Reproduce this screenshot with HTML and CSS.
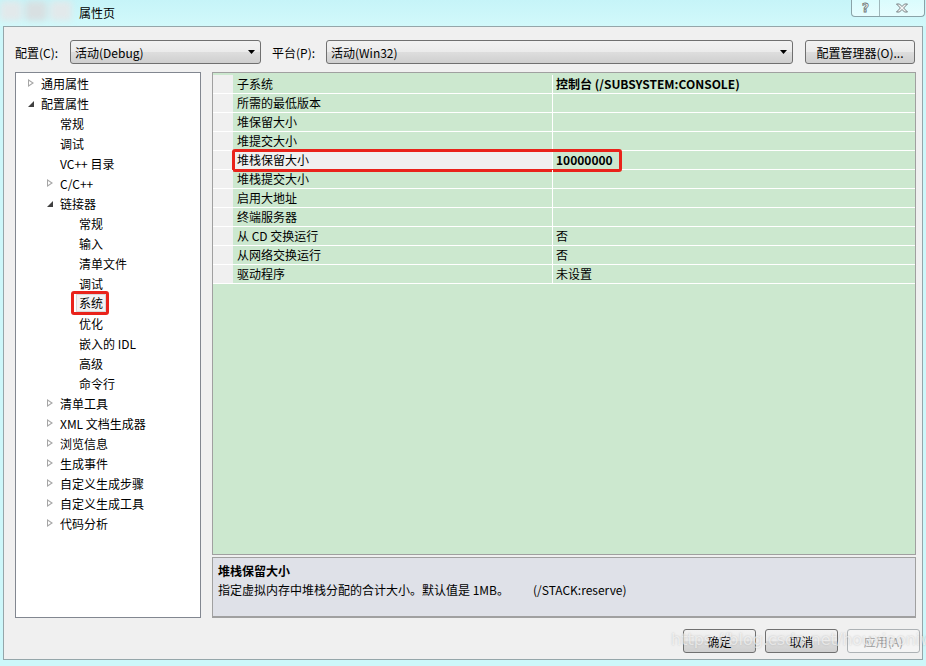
FILE: index.html
```html
<!DOCTYPE html>
<html lang="zh-CN">
<head>
    <meta charset="UTF-8">
    <title>属性页</title>
    <link rel="stylesheet" href="styles.css">
</head>
<body>
    <div class="titlebar">
        <div class="app-icon"><span></span><span></span><span></span></div>
        <div class="title">属性页</div>
        <div class="caption-btns">
            <div class="cap help">?</div>
            <div class="cap close">
                <svg width="14" height="10" viewBox="0 0 14 10"><path d="M1.5 1 L4.5 1 L7 3.5 L9.5 1 L12.5 1 L8.6 5 L12.5 9 L9.5 9 L7 6.5 L4.5 9 L1.5 9 L5.4 5 Z" fill="#f4f6f6" stroke="#6b7577" stroke-width="0.9"/></svg>
            </div>
        </div>
    </div>

    <div class="client">
        <div class="toolbar">
            <label class="lbl lbl-config">配置(C):</label>
            <div class="combo combo-config">
                <span>活动(Debug)</span>
                <svg class="drop" width="7" height="4" viewBox="0 0 7 4"><path d="M0 0 L7 0 L3.5 4 Z" fill="#000"/></svg>
            </div>
            <label class="lbl lbl-platform">平台(P):</label>
            <div class="combo combo-platform">
                <span>活动(Win32)</span>
                <svg class="drop" width="7" height="4" viewBox="0 0 7 4"><path d="M0 0 L7 0 L3.5 4 Z" fill="#000"/></svg>
            </div>
            <button class="btn btn-manager">配置管理器(O)...</button>
        </div>

        <div class="main">
            <ul class="tree">
                <li class="lv0"><i class="arrow closed"></i>通用属性</li>
                <li class="lv0"><i class="arrow open"></i>配置属性</li>
                <li class="lv1"><i class="arrow"></i>常规</li>
                <li class="lv1"><i class="arrow"></i>调试</li>
                <li class="lv1"><i class="arrow"></i>VC++ 目录</li>
                <li class="lv1"><i class="arrow closed"></i>C/C++</li>
                <li class="lv1"><i class="arrow open"></i>链接器</li>
                <li class="lv2"><i class="arrow"></i>常规</li>
                <li class="lv2"><i class="arrow"></i>输入</li>
                <li class="lv2"><i class="arrow"></i>清单文件</li>
                <li class="lv2"><i class="arrow"></i>调试</li>
                <li class="lv2 selected"><i class="arrow"></i><span class="sel">系统</span></li>
                <li class="lv2"><i class="arrow"></i>优化</li>
                <li class="lv2"><i class="arrow"></i>嵌入的 IDL</li>
                <li class="lv2"><i class="arrow"></i>高级</li>
                <li class="lv2"><i class="arrow"></i>命令行</li>
                <li class="lv1"><i class="arrow closed"></i>清单工具</li>
                <li class="lv1"><i class="arrow closed"></i>XML 文档生成器</li>
                <li class="lv1"><i class="arrow closed"></i>浏览信息</li>
                <li class="lv1"><i class="arrow closed"></i>生成事件</li>
                <li class="lv1"><i class="arrow closed"></i>自定义生成步骤</li>
                <li class="lv1"><i class="arrow closed"></i>自定义生成工具</li>
                <li class="lv1"><i class="arrow closed"></i>代码分析</li>
            </ul>

            <div class="right">
                <div class="grid">
                    <div class="row"><div class="gutter"></div><div class="name">子系统</div><div class="value bold">控制台 (/SUBSYSTEM:CONSOLE)</div></div>
                    <div class="row"><div class="gutter"></div><div class="name">所需的最低版本</div><div class="value"></div></div>
                    <div class="row"><div class="gutter"></div><div class="name">堆保留大小</div><div class="value"></div></div>
                    <div class="row"><div class="gutter"></div><div class="name">堆提交大小</div><div class="value"></div></div>
                    <div class="row current"><div class="gutter"></div><div class="name">堆栈保留大小</div><div class="value bold">10000000</div><div class="mark"></div></div>
                    <div class="row"><div class="gutter"></div><div class="name">堆栈提交大小</div><div class="value"></div></div>
                    <div class="row"><div class="gutter"></div><div class="name">启用大地址</div><div class="value"></div></div>
                    <div class="row"><div class="gutter"></div><div class="name">终端服务器</div><div class="value"></div></div>
                    <div class="row"><div class="gutter"></div><div class="name">从 CD 交换运行</div><div class="value">否</div></div>
                    <div class="row"><div class="gutter"></div><div class="name">从网络交换运行</div><div class="value">否</div></div>
                    <div class="row"><div class="gutter"></div><div class="name">驱动程序</div><div class="value">未设置</div></div>
                </div>
                <div class="desc">
                    <div class="desc-title">堆栈保留大小</div>
                    <div class="desc-text">指定虚拟内存中堆栈分配的合计大小。默认值是 1MB。<span class="switch">(/STACK:reserve)</span></div>
                </div>
            </div>
        </div>

        <div class="footer">
            <button class="btn">确定</button>
            <button class="btn">取消</button>
            <button class="btn disabled">应用(A)</button>
        </div>

        <div class="watermark">https://blog.csdn.net/houxiaoniwang</div>
    </div>
</body>
</html>
```

FILE: styles.css
```css
:root {
    --frame: #cdf7fa;
    --face: #f0f0f0;
    --grid-green: #cce8cf;
    --desc-bg: #dfe1e8;
    --border: #828790;
    --mark-red: #e9231b;
}
*, *::before, *::after {
    box-sizing: border-box;
}
body {
    margin: 0;
    width: 926px;
    height: 666px;
    overflow: hidden;
    background: var(--frame);
    font-family: "Noto Sans CJK SC", "Noto Sans", sans-serif;
    font-size: 12px;
    color: #000;
}

/* title bar */
.titlebar {
    height: 26px;
    display: flex;
    align-items: center;
    position: relative;
    background: linear-gradient(#c6f4f8, #d2f9fb);
}
.app-icon {
    width: 74px;
    height: 26px;
    display: flex;
    gap: 3px;
    padding: 1px 0 0 0;
    filter: blur(3px);
}
.app-icon span {
    width: 22px;
    height: 20px;
    background: #e2e9eb;
    border-radius: 4px;
}
.app-icon span:nth-child(2) {
    background: #d8e0e2;
}
.title {
    margin-left: 5px;
    margin-top: -2px;
}
.caption-btns {
    position: absolute;
    top: 0;
    left: 851px;
    width: 74px;
    height: 17px;
    display: flex;
    border: 1px solid #8aa3a8;
    border-top: none;
    border-radius: 0 0 4px 4px;
    background: linear-gradient(#dafcfd, #e6fdfe);
}
.cap {
    display: flex;
    align-items: center;
    justify-content: center;
    height: 100%;
}
.help {
    width: 28px;
    border-right: 1px solid #9fb6ba;
    font-family: "DejaVu Sans", sans-serif;
    font-weight: bold;
    font-size: 12px;
    color: #f4f6f6;
    -webkit-text-stroke: 0.8px #6b7577;
}
.close {
    flex: 1;
}

/* client area */
.client {
    position: relative;
    margin-left: 3px;
    width: 920px;
    height: 634px;
    background: var(--face);
    border: 1px solid #95a6aa;
    padding: 13px 0 0 11px;
}
.toolbar {
    display: flex;
    align-items: center;
    height: 24px;
}
.lbl-config {
    width: 55px;
}
.lbl-platform {
    width: 54px;
    margin-left: 11px;
}
.combo {
    height: 24px;
    display: flex;
    align-items: center;
    justify-content: space-between;
    padding: 0 5px 0 4px;
    border: 1px solid #707070;
    border-radius: 3px;
    background: linear-gradient(#f2f2f2 0%, #ebebeb 48%, #dddddd 52%, #cfcfcf 100%);
}
.combo-config {
    width: 191px;
}
.combo-platform {
    width: 467px;
}
.btn {
    height: 24px;
    border: 1px solid #707070;
    border-radius: 3px;
    background: linear-gradient(#f2f2f2 0%, #ebebeb 48%, #dddddd 52%, #cfcfcf 100%);
    font-family: inherit;
    font-size: 12px;
    color: #000;
    padding: 0;
}
.btn-manager {
    width: 110px;
    margin-left: 12px;
}

/* main */
.main {
    display: flex;
    margin-top: 8px;
    gap: 11px;
}
.tree {
    width: 186px;
    height: 546px;
    margin: 0;
    padding: 0;
    list-style: none;
    background: #fff;
    border: 1px solid var(--border);
}
.tree li {
    height: 20px;
    display: flex;
    align-items: center;
    white-space: nowrap;
}
.tree .lv0 { padding-left: 12px; }
.tree .lv1 { padding-left: 31px; }
.tree .lv2 { padding-left: 50px; }
.arrow {
    width: 13px;
    height: 9px;
    flex: none;
    position: relative;
}
.arrow.closed::before {
    content: "";
    position: absolute;
    left: 0;
    top: 0;
    border-left: 6px solid #a6a6a6;
    border-top: 4.5px solid transparent;
    border-bottom: 4.5px solid transparent;
}
.arrow.closed::after {
    content: "";
    position: absolute;
    left: 1px;
    top: 2px;
    border-left: 3.2px solid #fff;
    border-top: 2.5px solid transparent;
    border-bottom: 2.5px solid transparent;
}
.arrow.open::before {
    content: "";
    position: absolute;
    left: 0;
    top: 2px;
    border-right: 6px solid #404040;
    border-top: 6px solid transparent;
}
.selected .sel {
    position: relative;
    margin-left: -3px;
    padding: 0 2px;
    height: 18px;
    line-height: 16px;
    background: #f3f3f3;
    border: 1px solid #d9d9d9;
}
.selected .sel::after {
    content: "";
    position: absolute;
    left: -6px;
    top: -4px;
    width: 38px;
    height: 24px;
    border: 3px solid var(--mark-red);
    border-radius: 3px;
}

/* property grid */
.right {
    width: 704px;
    height: 546px;
    display: flex;
    flex-direction: column;
}
.grid {
    height: 484px;
    padding-top: 2px;
    background: var(--grid-green);
    border: 1px solid #a0a0a0;
}
.row {
    position: relative;
    display: flex;
    height: 19px;
    border-bottom: 1px solid #fff;
}
.gutter {
    width: 20px;
    background: var(--face);
}
.name {
    width: 320px;
    padding-left: 4px;
    border-right: 1px solid #fff;
    line-height: 18px;
}
.value {
    flex: 1;
    padding-left: 3px;
    line-height: 18px;
}
.bold {
    font-weight: bold;
}
.current .name {
    background: var(--face);
}
.mark {
    position: absolute;
    left: 19px;
    top: -2px;
    width: 390px;
    height: 23px;
    border: 3px solid var(--mark-red);
    border-radius: 3px;
}
.desc {
    height: 61px;
    margin-top: 2px;
    padding: 3px 0 0 5px;
    background: var(--desc-bg);
    border: 1px solid #a0a0a0;
    border-bottom: 2px solid #a0a0a0;
}
.desc-title {
    font-weight: bold;
    line-height: 19px;
}
.desc-text {
    white-space: nowrap;
    line-height: 19px;
}
.switch {
    margin-left: 24px;
}

/* footer */
.footer {
    display: flex;
    justify-content: flex-end;
    gap: 9px;
    margin-top: 11px;
    padding-right: 2px;
}
.footer .btn {
    width: 73px;
}
.btn.disabled {
    color: #a0a0a0;
    border-color: #adb2b5;
    background: #f4f4f4;
}
.watermark {
    position: absolute;
    left: 667px;
    top: 603px;
    font-family: "DejaVu Sans", sans-serif;
    font-size: 16px;
    color: rgba(255, 255, 255, 0.6);
    text-shadow: 0 0 2px rgba(120, 120, 120, 0.4);
    pointer-events: none;
}
```
